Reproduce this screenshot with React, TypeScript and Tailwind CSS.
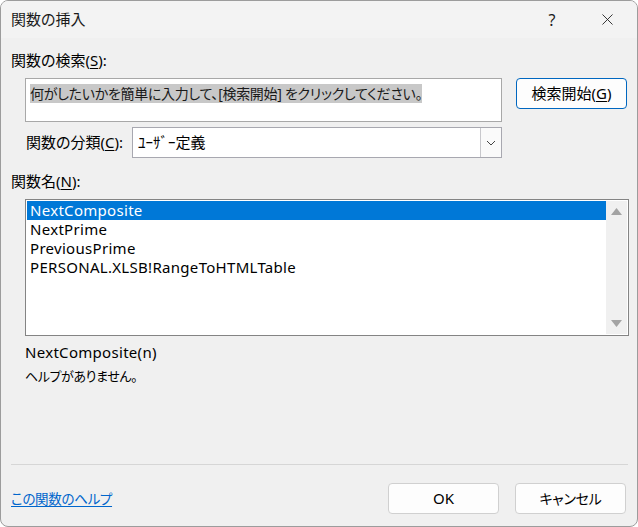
import { X } from 'lucide-react'

const font = "font-['Noto_Sans','Noto_Sans_CJK_JP',sans-serif] [font-feature-settings:'palt']"

const items = ['NextComposite', 'NextPrime', 'PreviousPrime', 'PERSONAL.XLSB!RangeToHTMLTable']

function Btn({ children, primary }: { children: React.ReactNode; primary?: boolean }) {
  return (
    <button
      className={`h-[31px] w-[111px] rounded-[4px] border bg-[#fdfdfd] text-[15px] text-black ${
        primary ? 'border-[#0067c0]' : 'border-[#d0d0d0]'
      }`}
    >
      {children}
    </button>
  )
}

export default function App() {
  return (
    <div className={`w-[638px] h-[527px] bg-white ${font}`}>
      <div className="w-[638px] h-[527px] rounded-[8px] border border-[#9c9c9c] bg-[#f0f0f0] flex flex-col overflow-hidden text-black">
        {/* タイトルバー */}
        <div className="h-[37px] shrink-0 bg-[#f3f3f3] flex items-center pl-[10px]">
          <span className="text-[15px] text-[#1b1b1b]">関数の挿入</span>
          <div className="ml-auto flex items-center h-full">
            <div className="w-[46px] h-full flex items-center justify-center text-[16px] text-[#1b1b1b] mr-[4px]">?</div>
            <div className="w-[56px] h-full flex items-center justify-center mr-[2px]">
              <X size={19} strokeWidth={1.1} className="text-[#1b1b1b]" />
            </div>
          </div>
        </div>

        <div className="flex-1 flex flex-col px-[10px]">
          <div className="mt-[12px] h-[20px] leading-[20px] text-[15px]">
            関数の検索(<span className="underline underline-offset-2">S</span>):
          </div>

          {/* 検索 */}
          <div className="mt-[8px] flex items-start">
            <div className="ml-[14px] w-[477px] h-[44px] border border-[#a8a8a8] bg-white px-[4px] pt-[2px]">
              <span className="bg-[#c8c8c8] text-[14px] tracking-[-0.3px] leading-[19px] text-[#1a1a1a] inline-block">
                何がしたいかを簡単に入力して、[検索開始] をクリックしてください。
              </span>
            </div>
            <div className="ml-[14px]">
              <Btn primary>
                検索開始(<span className="underline underline-offset-2">G</span>)
              </Btn>
            </div>
          </div>

          {/* 分類 */}
          <div className="mt-[5px] flex items-center">
            <div className="ml-[15px] w-[106px] text-[15px]">
              関数の分類(<span className="underline underline-offset-2">C</span>):
            </div>
            <div className="w-[370px] h-[31px] border border-[#a8a8b0] bg-white flex items-stretch">
              <div className="flex-1 flex items-center pl-[5px] text-[15px]">ﾕｰｻﾞｰ定義</div>
              <div className="w-[21px] border-l border-[#c8c8cc] bg-[#fafafa] flex items-center justify-center">
                <svg width="10" height="6" viewBox="0 0 10 6">
                  <path d="M1 1 L5 5 L9 1" fill="none" stroke="#444" strokeWidth="1" />
                </svg>
              </div>
            </div>
          </div>

          <div className="mt-[13px] h-[20px] leading-[20px] text-[15px]">
            関数名(<span className="underline underline-offset-2">N</span>):
          </div>

          {/* 関数リスト */}
          <div className="mt-[8px] ml-[14px] w-[604px] h-[137px] border border-[#848484] bg-white p-[1px] flex">
            <div className="flex-1 flex flex-col">
              {items.map((name, i) => (
                <div
                  key={name}
                  className={`h-[19px] leading-[19px] pl-[3px] text-[15px] tracking-[0.3px] ${
                    i === 0 ? 'bg-[#0078d7] text-white' : 'text-black'
                  }`}
                >
                  {name}
                </div>
              ))}
            </div>
            <div className="w-[21px] bg-[#f0f0f0] flex flex-col items-center justify-between py-[7px]">
              <svg width="11" height="7" viewBox="0 0 11 7">
                <path d="M5.5 0 L11 7 L0 7 Z" fill="#a3a3a3" />
              </svg>
              <svg width="11" height="7" viewBox="0 0 11 7">
                <path d="M0 0 L11 0 L5.5 7 Z" fill="#a3a3a3" />
              </svg>
            </div>
          </div>

          <div className="mt-[6px] ml-[14px] h-[20px] leading-[20px] text-[15px] tracking-[0.3px]">NextComposite(n)</div>
          <div className="mt-[4px] ml-[14px] h-[20px] leading-[20px] text-[13px] tracking-[-0.4px]">ヘルプがありません。</div>

          <div className="flex-1" />

          <div className="h-px bg-[#d6d6d6] mr-[-1px]" />

          <div className="mt-[18px] mb-[12px] flex items-center">
            <a className="text-[13.5px] tracking-[-0.3px] text-[#0066cc] underline underline-offset-2 mt-[2px]">この関数のヘルプ</a>
            <div className="ml-auto flex gap-[16px] mr-[1px]">
              <Btn>OK</Btn>
              <Btn>
                <span className="text-[14px] tracking-[-0.3px]">キャンセル</span>
              </Btn>
            </div>
          </div>
        </div>
      </div>
    </div>
  )
}
